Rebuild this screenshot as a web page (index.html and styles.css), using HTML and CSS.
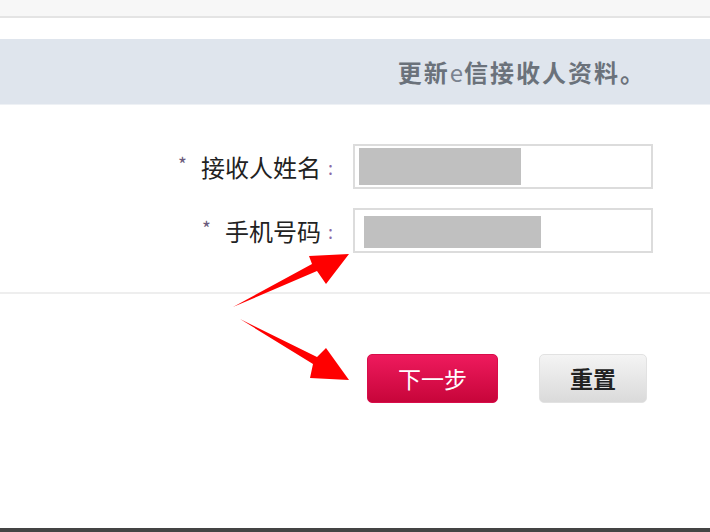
FILE: index.html
```html
<!DOCTYPE html>
<html lang="zh">
<head>
<meta charset="utf-8">
<title>更新e信接收人资料</title>
<link rel="stylesheet" href="styles.css">
</head>
<body>
<div class="page">
  <div class="topbar"></div>
  <div class="band"><span class="band-title">更新<span class="e">e</span>信接收人资料。</span></div>
  <div class="form">
    <div class="label"><span class="star">*</span><span class="ltext">接收人姓名</span><span class="colon">:</span></div>
    <div class="field"><span class="mask mask-name"></span></div>
    <div class="label"><span class="star">*</span><span class="ltext">手机号码</span><span class="colon">:</span></div>
    <div class="field"><span class="mask mask-phone"></span></div>
  </div>
  <div class="divider"></div>
  <div class="actions">
    <button class="btn btn-next">下一步</button>
    <button class="btn btn-reset">重置</button>
  </div>
  <div class="spacer"></div>
  <div class="bottombar"></div>
  <svg class="arrows" viewBox="0 0 710 532" width="710" height="532">
    <polygon fill="#ff0000" points="233,307 312,264 309,256 349,254 326,284 317,271"/>
    <polygon fill="#ff0000" points="240,319 317,357 326,348 349,380 310,378 313,364"/>
  </svg>
</div>
</body>
</html>
```

FILE: styles.css
```css
html, body {
  margin: 0;
  padding: 0;
  background: #ffffff;
}
body {
  font-family: "Noto Sans CJK SC", "Liberation Sans", sans-serif;
  overflow: hidden;
}
.page {
  position: relative;
  width: 710px;
  height: 532px;
  display: flex;
  flex-direction: column;
}
.topbar {
  height: 16px;
  background: #f7f7f7;
  border-bottom: 2px solid #e4e4e4;
  flex: none;
}
.band {
  margin-top: 21px;
  height: 65px;
  background: #dfe5ed;
  border-bottom: 1px solid #eef1f5;
  display: flex;
  justify-content: flex-end;
  align-items: center;
  padding-right: 64px;
  flex: none;
}
.band-title {
  font-size: 24px;
  font-weight: bold;
  color: #6b727b;
  letter-spacing: 2px;
  line-height: 1;
}
.band-title .e {
  font-weight: normal;
  color: #7a8290;
  letter-spacing: 0;
  margin-right: 1px;
}
.form {
  margin-top: 39px;
  display: grid;
  grid-template-columns: 337px 300px;
  column-gap: 16px;
  row-gap: 19px;
  flex: none;
}
.label {
  display: flex;
  justify-content: flex-end;
  align-items: center;
  font-size: 24px;
  color: #222222;
  height: 45px;
  padding-right: 4px;
}
.star {
  font-size: 19px;
  color: #6b5b7b;
  margin-right: 14px;
  position: relative;
  top: -3px;
}
.colon {
  color: #8a6aa8;
  margin-left: 7px;
  font-size: 18px;
}
.field {
  height: 41px;
  border: 2px solid #dcdcdc;
  background: #ffffff;
  display: flex;
  align-items: center;
}
.mask {
  display: block;
  background: #c0c0c0;
}
.mask-name {
  width: 162px;
  height: 37px;
  margin-left: 4px;
}
.mask-phone {
  width: 177px;
  height: 32px;
  margin-left: 9px;
  margin-top: 3px;
}
.divider {
  margin-top: 39px;
  height: 2px;
  background: #eeeeee;
  flex: none;
}
.actions {
  margin-top: 60px;
  padding-left: 367px;
  display: flex;
  gap: 41px;
  flex: none;
}
.btn {
  height: 49px;
  border-radius: 5px;
  font-family: "Noto Sans CJK SC", sans-serif;
  font-size: 23px;
  padding: 0;
  line-height: 1;
  cursor: pointer;
}
.btn-next {
  width: 131px;
  border: 1px solid #d80d4a;
  background: linear-gradient(#ee1a5d, #c7053a);
  color: #ffffff;
}
.btn-reset {
  width: 108px;
  border: 1px solid #e2e2e2;
  background: linear-gradient(#f4f4f4, #dadada);
  color: #222222;
  font-weight: bold;
}
.spacer {
  flex: 1;
}
.bottombar {
  height: 4px;
  background: #444444;
  flex: none;
}
.arrows {
  position: absolute;
  left: 0;
  top: 0;
  pointer-events: none;
}
```
